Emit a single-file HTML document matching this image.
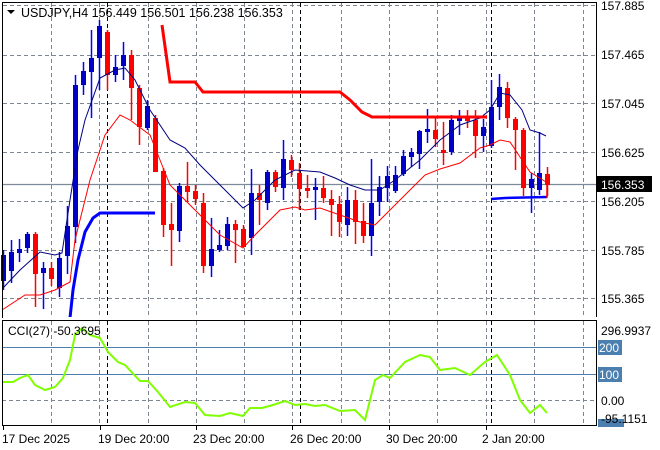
<!DOCTYPE html>
<html><head><meta charset="utf-8"><style>
html,body{margin:0;padding:0;background:#fff;width:660px;height:450px;overflow:hidden;font-family:"Liberation Sans",sans-serif;}
svg{position:absolute;left:0;top:0}
</style></head><body>
<svg id="s" width="660" height="450" xmlns="http://www.w3.org/2000/svg" font-family="Liberation Sans, sans-serif" font-size="12">
<rect x="0" y="0" width="660" height="450" fill="#fff"/>
<g id="grid" stroke="#7d8590" stroke-dasharray="4,3" stroke-width="1"></g>
<g id="g2"></g>
<!-- price line -->
<line x1="2" y1="184.5" x2="597" y2="184.5" stroke="#7d8a99" stroke-width="1.2"/>
<!-- cci levels -->
<line x1="2" y1="347.5" x2="597" y2="347.5" stroke="#4a7fb0" stroke-width="1"/>
<line x1="2" y1="374.5" x2="597" y2="374.5" stroke="#4a7fb0" stroke-width="1"/>
<line x1="2" y1="400.5" x2="597" y2="400.5" stroke="#7d8590" stroke-dasharray="4,3"/>
<g id="c"></g>
<polyline fill="none" stroke="#000080" stroke-width="1" points="3,288 20,270 40,252 55,255 62,253 70,200 78,150 85,120 100,78 115,70 125,68 135,80 150,110 170,140 185,148 200,165 220,185 243,208 255,200 275,180 295,170 320,172 335,178 350,185 365,190 380,190 395,180 420,160 440,140 460,125 480,118 490,110 500,93 510,95 522,110 530,130 540,133 546,136"/>
<polyline fill="none" stroke="#ff0000" stroke-width="1" points="2,310 25,295 40,295 55,290 70,282 75,240 90,180 105,135 120,115 130,120 150,135 160,160 170,185 185,200 200,215 220,235 243,248 255,235 280,210 295,207 305,210 320,208 340,215 360,222 375,225 390,210 410,190 425,175 440,169 460,163 480,148 490,145 500,140 510,142 520,157 530,172 546,182"/>
<polyline fill="none" stroke="#ff0000" stroke-width="3" points="162,25 170,82 195,82 203,92 340,92 350,100 362,112 372,117 487,117"/>
<polyline fill="none" stroke="#0000ff" stroke-width="3" points="70,318 73,290 78,260 85,232 93,218 100,213 155,213"/>
<polyline fill="none" stroke="#0000ff" stroke-width="2.5" points="491,199 505,198 547,197"/>
<line x1="547" y1="184" x2="547" y2="198" stroke="#ff0000" stroke-width="1.5"/>
<polyline fill="none" stroke="#7fff00" stroke-width="2" points="3,382 13,382 20,378 28,375 35,385 45,390 55,387 63,378 70,360 75,335 82,328 90,335 100,338 108,352 118,362 125,365 140,381 148,381 158,392 170,407 185,402 195,403 205,415 220,416 230,413 243,416 250,408 262,408 273,405 285,401 295,405 305,404 315,406 325,405 340,411 355,410 365,420 375,380 383,375 390,378 405,362 420,355 430,357 440,370 455,368 470,375 485,362 497,355 510,375 520,400 530,413 540,405 547,413"/>
<!-- frames -->
<rect x="2.5" y="2.5" width="594" height="315" fill="none" stroke="#000" stroke-width="1"/>
<rect x="2.5" y="320.5" width="594" height="105" fill="none" stroke="#000" stroke-width="1"/>
<!-- labels -->
<polygon points="7,10 15,10 11,14" fill="#000"/>
<text x="21" y="17" font-size="12.5">USDJPY,H4  156.449 156.501 156.238 156.353</text>
<text x="8" y="335" font-size="12">CCI(27) -50.3695</text>
<g font-size="12" fill="#000">
<text x="601" y="10">157.885</text>
<text x="601" y="59">157.465</text>
<text x="601" y="108">157.045</text>
<text x="601" y="157">156.625</text>
<text x="601" y="206">156.205</text>
<text x="601" y="255">155.785</text>
<text x="601" y="303">155.365</text>
<rect x="597" y="176" width="55" height="16" fill="#000"/>
<text x="601" y="189" fill="#fff">156.353</text>
<text x="601" y="335">296.9937</text>
<rect x="598" y="340" width="24" height="15" fill="#4a7fb0"/>
<text x="599" y="352" fill="#fff">200</text>
<rect x="598" y="367" width="24" height="15" fill="#4a7fb0"/>
<text x="599" y="379" fill="#fff">100</text>
<text x="601" y="405">0.00</text>
<rect x="598" y="419" width="26" height="8" fill="#4a7fb0"/>
<text x="601" y="423">-95.1151</text>
<text x="2" y="443">17 Dec 2025</text>
<text x="98" y="443">19 Dec 20:00</text>
<text x="193" y="443">23 Dec 20:00</text>
<text x="290" y="443">26 Dec 20:00</text>
<text x="386" y="443">30 Dec 20:00</text>
<text x="482" y="443">2 Jan 20:00</text>
</g>
<g stroke="#000"><line x1="3" y1="318" x2="597" y2="318" stroke="#fff" stroke-width="2"/></g>
</svg>
<script>
var NS="http://www.w3.org/2000/svg",g=document.getElementById('grid'),c=document.getElementById('c');
function L(p,x1,y1,x2,y2,col,dash,w){var l=document.createElementNS(NS,'line');l.setAttribute('x1',x1);l.setAttribute('y1',y1);l.setAttribute('x2',x2);l.setAttribute('y2',y2);if(col)l.setAttribute('stroke',col);if(dash)l.setAttribute('stroke-dasharray',dash);l.setAttribute('stroke-width',w||1);p.appendChild(l);}
[51,99,148,196,244,292,341,389,437,486,534,583].forEach(function(x){L(g,x+.5,3,x+.5,318);L(g,x+.5,321,x+.5,426);});
[5,55,103,152,201,250,298].forEach(function(y){L(g,3,y+.5,597,y+.5);});
[107,300,491].forEach(function(x){L(g,x+.5,3,x+.5,318,'#000','4,3');L(g,x+.5,321,x+.5,426,'#000','4,3');});
[3,100,196,292,389,486].forEach(function(x){L(g,x+.5,426,x+.5,431,'#000');});
var d=[
[3,'b',255,281,250,290],[11,'b',252,271,240,283],[19,'b',249,253,239,262],[27,'b',234,248,232,253],[35,'r',234,274,232,307],[43,'b',268,273,262,309],[51,'r',268,279,262,286],[59,'b',258,288,252,297],[67,'b',226,256,206,274],[75,'b',85,227,75,243],[83,'b',71,85,62,95],[91,'b',58,72,30,118],[99,'b',26,58,20,90],[107,'r',32,75,30,90],[115,'b',67,75,55,82],[123,'b',55,66,42,80],[131,'r',55,88,50,120],[139,'r',88,127,85,145],[147,'b',106,128,100,130],[155,'r',118,172,115,172],[163,'r',171,225,168,237],[171,'r',224,230,203,266],[179,'b',186,231,183,242],[187,'r',186,192,162,202],[195,'r',191,199,185,205],[203,'r',203,266,193,273],[211,'b',249,266,218,277],[219,'b',245,250,230,252],[227,'b',224,246,217,250],[235,'r',224,230,220,263],[243,'r',229,247,225,247],[251,'b',193,238,169,255],[259,'r',193,200,185,225],[267,'b',172,203,170,210],[275,'r',172,187,170,192],[283,'b',159,188,140,200],[291,'r',160,170,155,177],[299,'r',173,189,163,210],[307,'r',188,191,175,198],[315,'b',187,190,178,220],[323,'r',188,198,176,203],[331,'r',199,205,190,236],[339,'r',204,222,196,237],[347,'b',200,225,187,236],[355,'r',200,222,190,244],[363,'r',221,236,203,243],[371,'b',203,236,159,256],[379,'b',187,202,176,216],[387,'b',176,188,166,202],[395,'b',175,191,166,193],[403,'b',156,174,150,176],[411,'b',152,157,148,167],[419,'b',131,154,130,169],[427,'b',129,132,109,143],[435,'r',130,139,117,147],[443,'r',150,153,122,165],[451,'b',120,152,115,155],[459,'b',118,121,110,135],[467,'r',118,121,110,128],[475,'r',120,136,110,158],[483,'b',127,136,119,152],[491,'b',107,146,80,148],[499,'b',87,107,74,120],[507,'r',88,118,82,128],[515,'r',119,130,117,170],[523,'r',130,188,128,196],[531,'b',179,188,173,213],[539,'b',173,190,132,195],[547,'r',174,185,167,196]];
d.forEach(function(k){var col=k[1]=='r'?'#ff0000':'#0000c8';var wc=k[1]=='r'?'#ff0000':'#0000ff';L(c,k[0]+.5,k[4],k[0]+.5,k[5],wc,null,1.5);var r=document.createElementNS(NS,'rect');r.setAttribute('x',k[0]-2);r.setAttribute('y',k[2]);r.setAttribute('width',5);r.setAttribute('height',Math.max(2,k[3]-k[2]));r.setAttribute('fill',col);c.appendChild(r);});
</script>
</body></html>
